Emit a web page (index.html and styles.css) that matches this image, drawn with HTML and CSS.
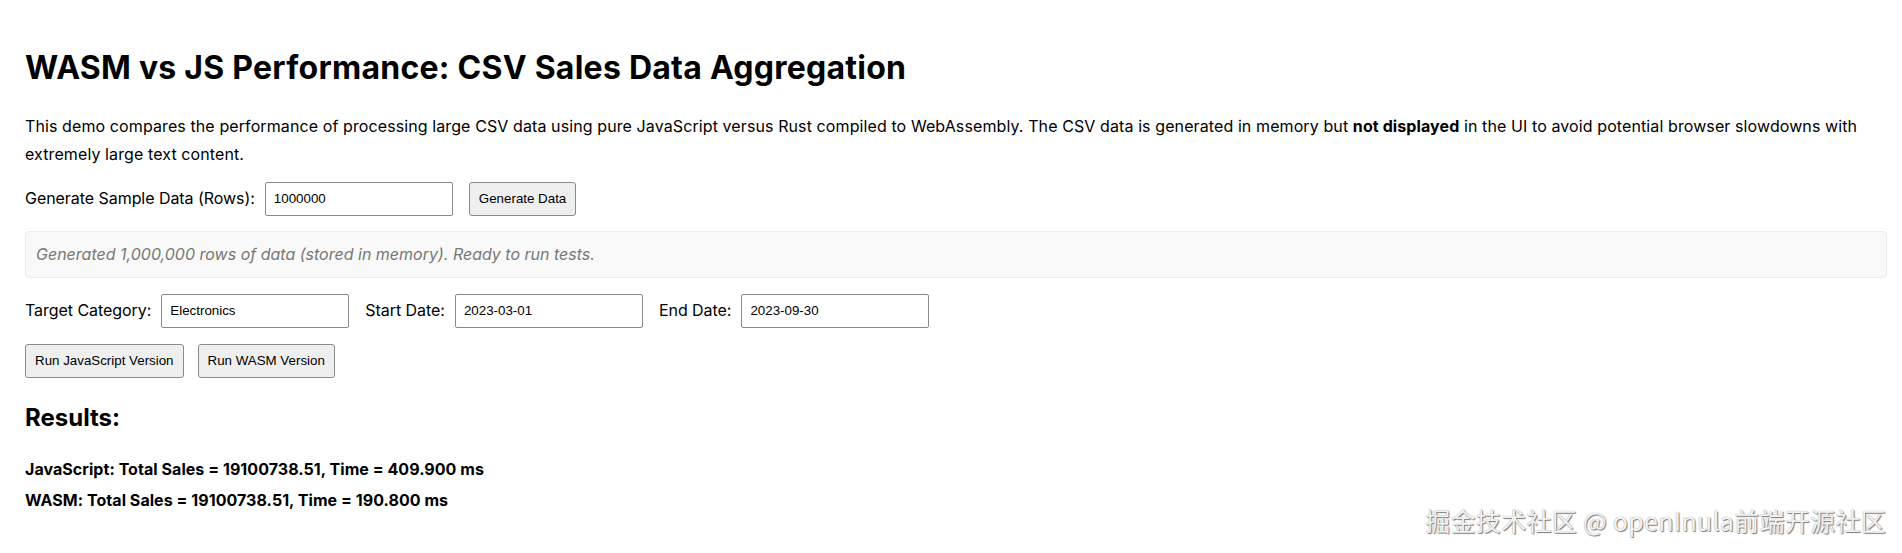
FILE: index.html
```html
<!DOCTYPE html>
<html lang="en">
<head>
<meta charset="utf-8">
<title>WASM vs JS Performance</title>
<link rel="stylesheet" href="styles.css">
</head>
<body>
<h1 class="title">WASM vs JS Performance: CSV Sales Data Aggregation</h1>
<p class="intro">This demo compares the performance of processing large CSV data using pure JavaScript versus Rust compiled to WebAssembly. The CSV data is generated in memory but <strong>not displayed</strong> in the UI to avoid potential browser slowdowns with extremely large text content.</p>

<div class="row">
  <div class="field">
    <label class="label" for="rows">Generate Sample Data (Rows):</label>
    <input class="input" id="rows" type="text" value="1000000">
  </div>
  <button class="btn">Generate Data</button>
</div>

<div class="status">Generated 1,000,000 rows of data (stored in memory). Ready to run tests.</div>

<div class="row">
  <div class="field">
    <label class="label" for="cat">Target Category:</label>
    <input class="input" id="cat" type="text" value="Electronics">
  </div>
  <div class="field">
    <label class="label" for="start">Start Date:</label>
    <input class="input" id="start" type="text" value="2023-03-01">
  </div>
  <div class="field">
    <label class="label" for="end">End Date:</label>
    <input class="input" id="end" type="text" value="2023-09-30">
  </div>
</div>

<div class="row row-buttons">
  <button class="btn">Run JavaScript Version</button>
  <button class="btn">Run WASM Version</button>
</div>

<h2 class="results-title">Results:</h2>
<div class="results">
  <div class="result">JavaScript: Total Sales = 19100738.51, Time = 409.900 ms</div>
  <div class="result">WASM: Total Sales = 19100738.51, Time = 190.800 ms</div>
</div>

<div class="watermark">掘金技术社区 @ openInula前端开源社区</div>
</body>
</html>
```
FILE: styles.css
```css
html, body {
  background: #fff;
}
body {
  margin: 0;
  padding: 49px 15px 20px 25px;
  font-family: Inter, "Noto Sans", sans-serif;
  font-size: 16px;
  line-height: 1.7;
  color: #000;
  position: relative;
  min-height: 553px;
  box-sizing: border-box;
}
.title {
  margin: 0 0 26px;
  font-size: 32px;
  font-weight: 700;
  line-height: 1.2;
  letter-spacing: 0.25px;
}
.intro {
  margin: 0 0 14px;
  letter-spacing: 0.1px;
}
.intro strong {
  font-weight: 700;
}
.row {
  display: flex;
  align-items: center;
  gap: 16px;
  height: 34px;
}
.row-buttons {
  margin-top: 16px;
  gap: 14px;
}
.field {
  display: flex;
  align-items: center;
  gap: 10px;
}
.label {
  white-space: nowrap;
  letter-spacing: -0.05px;
}
.input {
  box-sizing: border-box;
  width: 188px;
  height: 34px;
  margin: 0;
  padding: 0 8px;
  border: 1px solid #8a8a8a;
  border-radius: 2px;
  background: #fff;
  color: #000;
  font-family: "Liberation Sans", Arial, sans-serif;
  font-size: 13.33px;
}
.btn {
  box-sizing: border-box;
  height: 34px;
  margin: 0;
  padding: 0 9px;
  border: 1px solid #8a8a8a;
  border-radius: 3px;
  background: #efefef;
  color: #000;
  font-family: "Liberation Sans", Arial, sans-serif;
  font-size: 13.33px;
  cursor: pointer;
}
.status {
  margin: 15px 0 16px;
  padding: 9px 10px;
  background: #f9f9f9;
  border: 1px solid #ececec;
  border-radius: 4px;
  color: #777;
  font-style: italic;
}
.results-title {
  margin: 26px 0 23px;
  font-size: 24px;
  font-weight: 700;
  line-height: 1.2;
}
.results {
  display: flex;
  flex-direction: column;
  gap: 4px;
}
.result {
  font-weight: 700;
  letter-spacing: 0.05px;
}
.watermark {
  position: absolute;
  right: 16px;
  top: 503px;
  font-family: "Noto Sans CJK SC", "Noto Sans", sans-serif;
  font-size: 25px;
  line-height: 34px;
  letter-spacing: 0.3px;
  color: #f2f2f2;
  text-shadow: 1px 1px 1px #7a7a7a, 0 0 1px #9a9a9a;
  white-space: nowrap;
}
```
